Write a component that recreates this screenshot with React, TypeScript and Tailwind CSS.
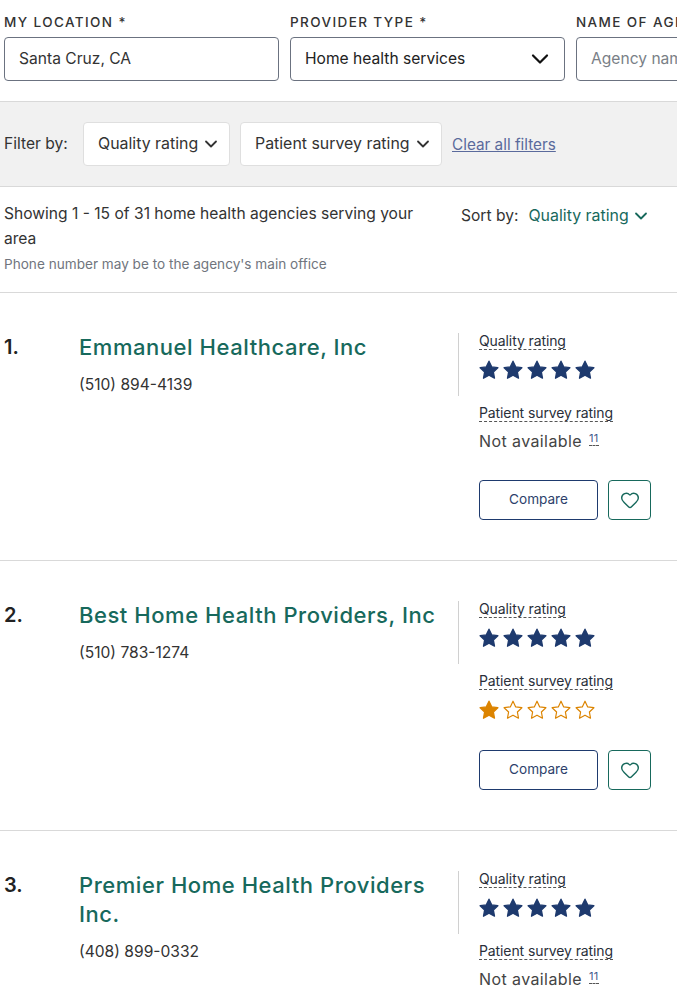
import { ChevronDown, Heart } from "lucide-react";

const body = { fontFamily: "Inter, sans-serif" };

interface Agency {
  rank: number;
  name: string;
  phone: string;
  quality: number;
  survey: number | null;
}

const agencies: Agency[] = [
  { rank: 1, name: "Emmanuel Healthcare, Inc", phone: "(510) 894-4139", quality: 5, survey: null },
  { rank: 2, name: "Best Home Health Providers, Inc", phone: "(510) 783-1274", quality: 5, survey: 1 },
  { rank: 3, name: "Premier Home Health Providers Inc.", phone: "(408) 899-0332", quality: 5, survey: null },
];

const Star = ({ filled, color }: { filled: boolean; color: string }) => (
  <svg width="20" height="20" viewBox="0 0 20 20" className="shrink-0">
    <path
      d="M10 1.2l2.7 5.7 6.2.8-4.5 4.300 1.100 6.200L10 15.200l-5.500 3 1.100-6.200L1.100 7.700l6.200-.8z"
      fill={filled ? color : "none"}
      stroke={color}
      strokeWidth={filled ? 1.3 : 1.2}
      strokeLinejoin="round"
    />
  </svg>
);

const Stars = ({ count, color }: { count: number; color: string }) => (
  <div className="flex gap-1 h-6 items-center">
    {[0, 1, 2, 3, 4].map((i) => (
      <Star key={i} filled={i < count} color={color} />
    ))}
  </div>
);

const RatingLabel = ({ children }: { children: string }) => (
  <span className="block w-fit h-[17px] text-[14px] leading-[16px] text-[#2a2f3a] border-b border-dashed border-[#555] tracking-[-0.1px] whitespace-nowrap">
    {children}
  </span>
);

const AgencyRow = ({ agency }: { agency: Agency }) => (
  <div className="border-t border-[#d9d9d9] pt-10 pb-10 pl-1 flex">
    <div className="w-[75px] shrink-0 text-[20px] leading-7 font-semibold text-[#222]">{agency.rank}.</div>
    <div className="w-[379px] shrink-0 pr-1">
      <h3 className="text-[22px] leading-[29px] font-medium text-[#17695c] tracking-[0.55px]">{agency.name}</h3>
      <p className="text-[15.6px] leading-5 text-[#333] mt-[13px]">{agency.phone}</p>
    </div>
    <div className="flex-1 relative pl-[21px]">
      <div className="absolute left-0 top-0 w-px h-[63px] bg-[#d0d0d0]" />
      <RatingLabel>Quality rating</RatingLabel>
      <div className="mt-2">
        <Stars count={agency.quality} color="#1e3a6e" />
      </div>
      <div className="mt-[23px]">
        <RatingLabel>Patient survey rating</RatingLabel>
      </div>
      {agency.survey === null ? (
        <div className="mt-1 h-6 text-[16px] leading-6 text-[#444] tracking-[0.4px] whitespace-nowrap">
          Not available{" "}
          <span className="ml-[2px] text-[11px] align-[5px] text-[#3f5a8a] border-b border-dashed border-[#555]">11</span>
        </div>
      ) : (
        <div className="mt-2">
          <Stars count={agency.survey} color="#dc8400" />
        </div>
      )}
      <div className={`flex gap-[10px] ${agency.survey === null ? "mt-[30px]" : "mt-[28px]"}`}>
        <button className="w-[119px] h-10 rounded border border-[#1e3a6e] text-[13.6px] pb-[2px] text-[#2d3f6b] bg-white">Compare</button>
        <button className="w-[43px] h-10 rounded border border-[#17695c] flex items-center justify-center bg-white">
          <Heart size={20} strokeWidth={1.7} color="#17695c" />
        </button>
      </div>
    </div>
  </div>
);

const FieldLabel = ({ children }: { children: string }) => (
  <div className="text-[13.5px] leading-[18px] font-medium tracking-[1.4px] text-[#333] whitespace-nowrap mb-[6px]">{children}</div>
);

export default function App() {
  return (
    <div className="w-[677px] h-[1006px] overflow-hidden bg-white" style={body}>
      <div className="flex gap-[11px] pl-1 pt-[13px] pb-5">
        <div className="w-[275px] shrink-0">
          <FieldLabel>MY LOCATION *</FieldLabel>
          <div className="h-11 border border-[#6b7280] rounded flex items-center px-[14px] text-[15.6px] text-[#333]">Santa Cruz, CA</div>
        </div>
        <div className="w-[275px] shrink-0">
          <FieldLabel>PROVIDER TYPE *</FieldLabel>
          <div className="h-11 border border-[#6b7280] rounded flex items-center justify-between pl-[14px] pr-[10px] text-[15.6px] text-[#222]">
            Home health services
            <ChevronDown size={28} strokeWidth={1.9} color="#111" />
          </div>
        </div>
        <div className="w-[275px] shrink-0">
          <FieldLabel>NAME OF AGENCY</FieldLabel>
          <div className="h-11 border border-[#6b7280] rounded flex items-center px-[14px] text-[15.6px] text-[#7a7f87]">Agency name</div>
        </div>
      </div>

      <div className="h-[86px] bg-[#f1f1f1] border-y border-[#d9d9d9] flex items-center pl-1 text-[15.6px] text-[#333]">
        <span className="w-[79px] shrink-0">Filter by:</span>
        <button className="h-11 w-[147px] shrink-0 bg-white border border-[#dfdfdf] rounded flex items-center justify-between pl-[14px] pr-2 text-[15.9px] whitespace-nowrap">
          Quality rating
          <ChevronDown size={20} strokeWidth={2.2} />
        </button>
        <button className="h-11 w-[202px] shrink-0 ml-[10px] bg-white border border-[#dfdfdf] rounded flex items-center justify-between pl-[14px] pr-2 text-[15.9px] whitespace-nowrap">
          Patient survey rating
          <ChevronDown size={20} strokeWidth={2.2} />
        </button>
        <a className="ml-[10px] mt-[2px] underline text-[15.3px] text-[#5a6a9c] whitespace-nowrap">Clear all filters</a>
      </div>

      <div className="h-[105px] flex pl-1 pt-[14px]">
        <div className="w-[430px] shrink-0">
          <p className="text-[15.6px] leading-[25px] text-[#333] pr-2">Showing 1 - 15 of 31 home health agencies serving your area</p>
          <p className="text-[13.6px] leading-5 text-[#70757d] mt-[3px]">Phone number may be to the agency's main office</p>
        </div>
        <div className="flex items-start text-[15.6px] leading-6 pl-[27px] whitespace-nowrap pt-[3px]">
          <span className="text-[#333]">Sort by:</span>
          <span className="ml-[10px] text-[15.9px] text-[#17695c]">Quality rating</span>
          <ChevronDown size={20} strokeWidth={2.2} color="#17695c" className="ml-[2px] mt-[2px]" />
        </div>
      </div>

      {agencies.map((a) => (
        <AgencyRow key={a.rank} agency={a} />
      ))}
    </div>
  );
}
